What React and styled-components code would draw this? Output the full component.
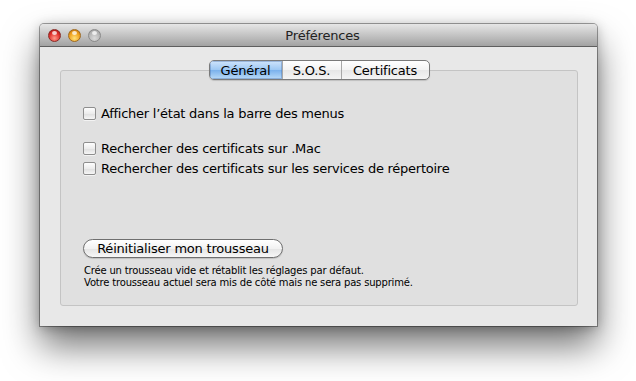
import React from "react";
import styled, { createGlobalStyle } from "styled-components";

const GlobalStyle = createGlobalStyle`
  html, body {
    margin: 0;
    padding: 0;
    background: #ffffff;
  }
  body {
    font-family: "DejaVu Sans", "Liberation Sans", sans-serif;
    color: #000;
  }
`;

const Page = styled.div`
  width: 636px;
  height: 381px;
  padding: 24px 0 0 40px;
  box-sizing: border-box;
`;

const Window = styled.div`
  width: 557px;
  height: 302px;
  display: flex;
  flex-direction: column;
  border-radius: 4px 4px 0 0;
  box-shadow: 0 0 0 1px rgba(0, 0, 0, 0.35), 0 20px 36px rgba(0, 0, 0, 0.55),
    0 2px 12px rgba(0, 0, 0, 0.25);
  background: #e8e8e8;
  overflow: hidden;
`;

const TitleBar = styled.div`
  height: 22px;
  flex: none;
  display: grid;
  grid-template-columns: 80px 1fr 80px;
  align-items: center;
  background: linear-gradient(#e6e6e6, #c4c4c4 50%, #a2a2a2);
  border-bottom: 1px solid #5e5e5e;
  padding-left: 8px;
`;

const Lights = styled.div`
  display: flex;
  gap: 7px;
  align-items: center;
`;

const Light = styled.span`
  width: 13px;
  height: 13px;
  border-radius: 50%;
  box-sizing: border-box;
  border: 1px solid ${(p) => p.edge};
  background: radial-gradient(circle at 50% 75%, ${(p) => p.glow} 0%, ${(p) => p.base} 55%, ${(p) => p.dark} 100%);
  position: relative;
  &::after {
    content: "";
    position: absolute;
    left: 3px;
    top: 1px;
    width: 5px;
    height: 4px;
    border-radius: 50%;
    background: rgba(255, 255, 255, 0.75);
  }
`;

const Title = styled.div`
  text-align: center;
  font-size: 13px;
  color: #222;
  letter-spacing: -0.2px;
`;

const Content = styled.div`
  flex: 1;
  padding: 23px 19px 20px 20px;
  display: flex;
`;

const GroupBox = styled.div`
  flex: 1;
  border: 1px solid #c4c4c4;
  border-radius: 3px;
  background: #e0e0e0;
  display: flex;
  flex-direction: column;
  padding: 0 22px 0 22px;
`;

const TabRow = styled.div`
  display: flex;
  justify-content: center;
  margin-top: -11px;
`;

const Tabs = styled.div`
  display: flex;
  height: 20px;
  box-sizing: border-box;
  border: 1px solid #7a7a7a;
  border-radius: 5px;
  overflow: hidden;
  background: linear-gradient(#ffffff, #f3f3f3 50%, #e7e7e7 51%, #f4f4f4);
  box-shadow: 0 1px 1px rgba(0, 0, 0, 0.15);
`;

const Tab = styled.div`
  width: ${(p) => p.w}px;
  display: flex;
  align-items: center;
  justify-content: center;
  font-size: 13px;
  letter-spacing: -0.2px;
  border-left: ${(p) => (p.first ? "none" : "1px solid #a8a8a8")};
  background: ${(p) =>
    p.active
      ? "linear-gradient(#cfe4fb, #9cc7f3 50%, #7ab1ec 51%, #b9daf8)"
      : "transparent"};
  box-shadow: ${(p) => (p.active ? "inset 0 0 0 1px rgba(60,100,160,0.35)" : "none")};
`;

const Options = styled.div`
  display: flex;
  flex-direction: column;
  margin-top: 24px;
`;

const Row = styled.label`
  display: flex;
  align-items: center;
  gap: 5px;
  height: 19px;
  font-size: 13px;
  letter-spacing: -0.25px;
  margin-top: ${(p) => p.gap || 0}px;
`;

const Box = styled.span`
  width: 13px;
  height: 13px;
  box-sizing: border-box;
  border: 1px solid #8e8e8e;
  border-radius: 2px;
  background: linear-gradient(#fdfdfd, #ececec 50%, #dedede 51%, #f6f6f6);
  box-shadow: 0 1px 0 rgba(255, 255, 255, 0.6);
  flex: none;
`;

const Spacer = styled.div`
  flex: 1;
`;

const ResetButton = styled.div`
  width: 200px;
  height: 19px;
  box-sizing: border-box;
  border: 1px solid #6f6f6f;
  border-radius: 10px;
  background: linear-gradient(#ffffff, #f2f2f2 50%, #e4e4e4 51%, #f7f7f7);
  box-shadow: 0 1px 1px rgba(0, 0, 0, 0.15);
  display: flex;
  align-items: center;
  justify-content: center;
  font-size: 13px;
  letter-spacing: -0.2px;
`;

const Note = styled.div`
  margin-top: 7px;
  margin-left: 1px;
  margin-bottom: 16px;
  font-size: 10px;
  line-height: 12px;
  letter-spacing: -0.18px;
`;

export default function App() {
  return (
    <>
      <GlobalStyle />
      <Page>
        <Window>
          <TitleBar>
            <Lights>
              <Light base="#e0302c" glow="#ff9a8a" dark="#a0100c" edge="#8a2a26" />
              <Light base="#f0a21e" glow="#ffe27a" dark="#b86a08" edge="#a06a1e" />
              <Light base="#b8b8b8" glow="#dadada" dark="#9a9a9a" edge="#8a8a8a" />
            </Lights>
            <Title>Préférences</Title>
            <span />
          </TitleBar>
          <Content>
            <GroupBox>
              <TabRow>
                <Tabs>
                  <Tab first active w={72}>Général</Tab>
                  <Tab w={58}>S.O.S.</Tab>
                  <Tab w={87}>Certificats</Tab>
                </Tabs>
              </TabRow>
              <Options>
                <Row>
                  <Box />
                  Afficher l’état dans la barre des menus
                </Row>
                <Row gap={16}>
                  <Box />
                  Rechercher des certificats sur .Mac
                </Row>
                <Row gap={1}>
                  <Box />
                  Rechercher des certificats sur les services de répertoire
                </Row>
              </Options>
              <Spacer />
              <ResetButton>Réinitialiser mon trousseau</ResetButton>
              <Note>
                Crée un trousseau vide et rétablit les réglages par défaut.
                <br />
                Votre trousseau actuel sera mis de côté mais ne sera pas supprimé.
              </Note>
            </GroupBox>
          </Content>
        </Window>
      </Page>
    </>
  );
}
